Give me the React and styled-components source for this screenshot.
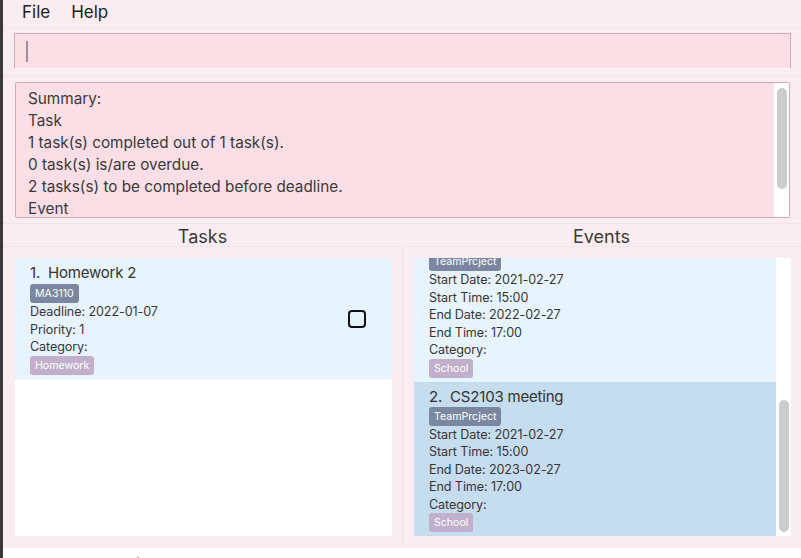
import React, { useLayoutEffect, useRef } from "react";
import styled, { createGlobalStyle } from "styled-components";

const GlobalStyle = createGlobalStyle`
  html, body {
    margin: 0;
    padding: 0;
    background: #ffffff;
    font-family: Inter, "Noto Sans", sans-serif;
    color: #383838;
  }
  * { box-sizing: border-box; }
`;

const Window = styled.div`
  width: 801px;
  height: 558px;
  overflow: hidden;
  display: flex;
  flex-direction: column;
  background: #f9edf1;
  border-left: 3px solid #3d393a;
`;

const MenuBar = styled.div`
  height: 28px;
  flex-shrink: 0;
  display: flex;
  gap: 21px;
  padding-left: 19px;
  border-bottom: 1px solid #f4e5ea;
`;

const MenuItem = styled.span`
  font-size: 17px;
  line-height: 24px;
  color: #222;
`;

const CommandSection = styled.div`
  flex-shrink: 0;
  padding: 5px 10px 6px 11px;
  border-bottom: 1px solid #f3e4e9;
`;

const CommandBox = styled.div`
  height: 36px;
  background: #fbdee6;
  border: 1px solid #d3aab5;
  border-bottom-color: #ffffff;
  display: flex;
  align-items: center;
  padding-left: 11px;
`;

const Caret = styled.span`
  width: 1.5px;
  height: 21px;
  background: #a38f97;
`;

const ResultSection = styled.div`
  flex-shrink: 0;
  padding: 6px 11px 5px 12px;
  border-bottom: 1px solid #f3e4e9;
`;

const ResultBox = styled.div`
  height: 136px;
  background: #fbdee6;
  border: 1px solid #d3aab5;
  border-radius: 2px;
  display: flex;
  overflow: hidden;
`;

const ResultText = styled.div`
  flex: 1;
  overflow: hidden;
  padding: 5px 12px;
  font-size: 15.3px;
  line-height: 22px;
  color: #3a3a3a;
`;

const Track = styled.div`
  width: 15px;
  flex-shrink: 0;
  background: #ffffff;
  padding: 0 2px 0 3px;
`;

const Thumb = styled.div`
  width: 10px;
  height: ${(p) => p.$size}px;
  margin-top: ${(p) => p.$offset}px;
  background: #cccccc;
  border-radius: 5px;
`;

const Panels = styled.div`
  flex-shrink: 0;
  display: grid;
  grid-template-columns: 399px 399px;
`;

const Column = styled.div`
  display: flex;
  flex-direction: column;
`;

const PanelHeader = styled.div`
  height: 23px;
  padding-top: 3px;
  border-bottom: 1px solid #f3e4e9;
  text-align: center;
  font-size: 18px;
  line-height: 20px;
  color: #3a3a3a;
`;

const Pane = styled.div`
  height: 301px;
  padding: ${(p) => (p.$right ? "11px 10px 12px 11px" : "11px 10px 12px 12px")};
  border-left: ${(p) => (p.$right ? "1px solid #f2e3e8" : "none")};
`;

const ListView = styled.div`
  height: 278px;
  background: #ffffff;
  display: flex;
`;

const Viewport = styled.div`
  flex: 1;
  overflow: hidden;
`;

const Card = styled.div`
  display: flex;
  align-items: center;
  background: ${(p) => (p.$selected ? "#c6dcef" : "#e7f4fd")};
  padding: 5px 26px 4px 15px;
`;

const CardBody = styled.div`
  flex: 1;
  display: flex;
  flex-direction: column;
  align-items: flex-start;
`;

const Title = styled.div`
  font-size: 15px;
  letter-spacing: -0.2px;
  line-height: 20px;
  color: #333;
  white-space: pre;
`;

const Detail = styled.div`
  font-size: 12.6px;
  letter-spacing: -0.1px;
  line-height: 17.5px;
  color: #363636;
`;

const Tag = styled.span`
  height: 19px;
  padding: 0 5px;
  border-radius: 3px;
  font-size: 10.6px;
  line-height: 19px;
  color: #ffffff;
  background: ${(p) => (p.$kind === "category" ? "#c1afcc" : "#7a87a1")};
  margin-top: ${(p) => p.$gap || 0}px;
`;

const CheckBox = styled.span`
  width: 18px;
  height: 18px;
  border: 2px solid #111;
  border-radius: 4px;
`;

const StatusBar = styled.div`
  flex: 1;
  background: #ffffff;
  padding: 6px 10px;
  font-size: 13px;
  line-height: 18px;
  color: #333;
`;

const events = [
  {
    id: 1,
    name: "Team meeting",
    tag: "TeamPrcject",
    startDate: "2021-02-27",
    startTime: "15:00",
    endDate: "2022-02-27",
    endTime: "17:00",
    category: "School",
  },
  {
    id: 2,
    name: "CS2103 meeting",
    tag: "TeamPrcject",
    startDate: "2021-02-27",
    startTime: "15:00",
    endDate: "2023-02-27",
    endTime: "17:00",
    category: "School",
    selected: true,
  },
];

function EventCard({ ev }) {
  return (
    <Card $selected={ev.selected}>
      <CardBody>
        <Title>{`${ev.id}.  ${ev.name}`}</Title>
        <Tag>{ev.tag}</Tag>
        <Detail>Start Date: {ev.startDate}</Detail>
        <Detail>Start Time: {ev.startTime}</Detail>
        <Detail>End Date: {ev.endDate}</Detail>
        <Detail>End Time: {ev.endTime}</Detail>
        <Detail>Category:</Detail>
        <Tag $kind="category">{ev.category}</Tag>
      </CardBody>
    </Card>
  );
}

export default function App() {
  const eventsRef = useRef(null);

  useLayoutEffect(() => {
    const el = eventsRef.current;
    if (el) el.scrollTop = el.scrollHeight;
  }, []);

  return (
    <>
      <GlobalStyle />
      <Window>
        <MenuBar>
          <MenuItem>File</MenuItem>
          <MenuItem>Help</MenuItem>
        </MenuBar>

        <CommandSection>
          <CommandBox>
            <Caret />
          </CommandBox>
        </CommandSection>

        <ResultSection>
          <ResultBox>
            <ResultText>
              <div>Summary:</div>
              <div>Task</div>
              <div>1 task(s) completed out of 1 task(s).</div>
              <div>0 task(s) is/are overdue.</div>
              <div>2 tasks(s) to be completed before deadline.</div>
              <div>Event</div>
              <div>2 event(s) in total.</div>
            </ResultText>
            <Track>
              <Thumb $offset={5} $size={101} />
            </Track>
          </ResultBox>
        </ResultSection>

        <Panels>
          <Column>
            <PanelHeader>Tasks</PanelHeader>
            <Pane>
              <ListView>
                <Viewport>
                  <Card>
                    <CardBody>
                      <Title>{"1.  Homework 2"}</Title>
                      <Tag $gap={1}>MA3110</Tag>
                      <Detail>Deadline: 2022-01-07</Detail>
                      <Detail>Priority: 1</Detail>
                      <Detail>Category:</Detail>
                      <Tag $kind="category">Homework</Tag>
                    </CardBody>
                    <CheckBox />
                  </Card>
                </Viewport>
              </ListView>
            </Pane>
          </Column>

          <Column>
            <PanelHeader>Events</PanelHeader>
            <Pane $right>
              <ListView>
                <Viewport ref={eventsRef}>
                  {events.map((ev) => (
                    <EventCard key={ev.id} ev={ev} />
                  ))}
                </Viewport>
                <Track>
                  <Thumb $offset={142} $size={132} />
                </Track>
              </ListView>
            </Pane>
          </Column>
        </Panels>

        <StatusBar>./data/addressbook.json</StatusBar>
      </Window>
    </>
  );
}
